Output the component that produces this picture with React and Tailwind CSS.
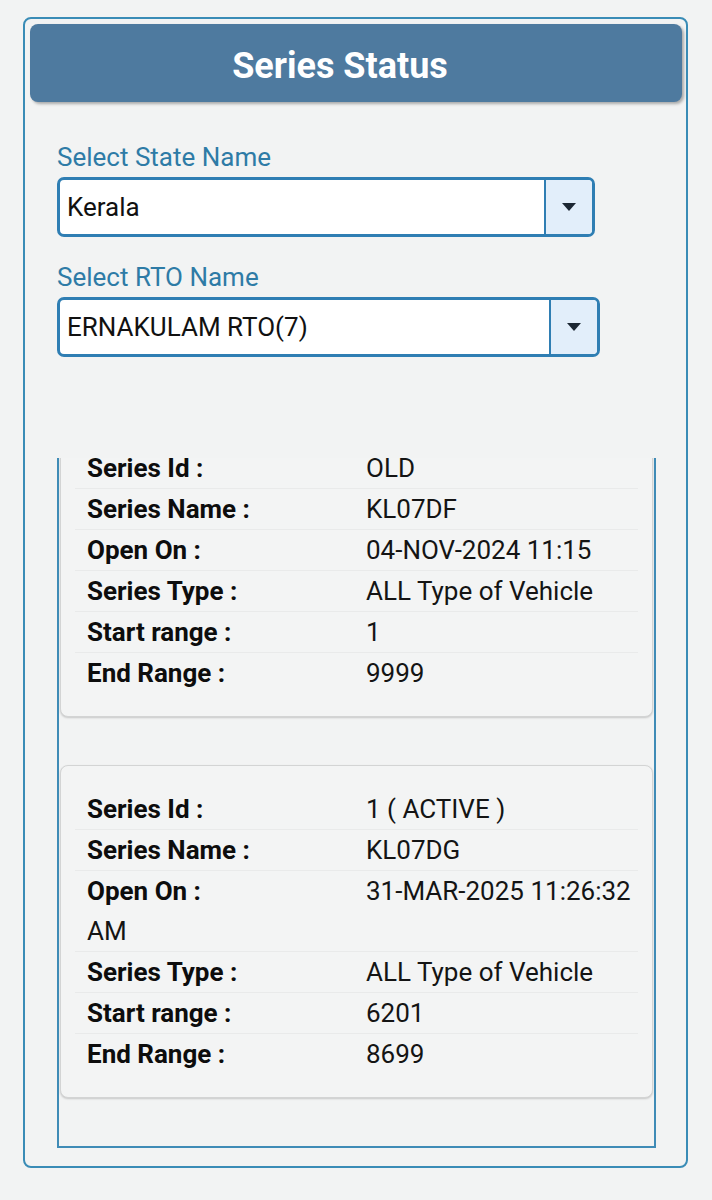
import React from "react";

const card1 = [
  ["Series Id :", "OLD"],
  ["Series Name :", "KL07DF"],
  ["Open On :", "04-NOV-2024 11:15"],
  ["Series Type :", "ALL Type of Vehicle"],
  ["Start range :", "1"],
  ["End Range :", "9999"],
];

const card2 = [
  ["Series Id :", "1 ( ACTIVE )"],
  ["Series Name :", "KL07DG"],
  ["Open On :", "31-MAR-2025 11:26:32 AM"],
  ["Series Type :", "ALL Type of Vehicle"],
  ["Start range :", "6201"],
  ["End Range :", "8699"],
];

function Caret() {
  return (
    <svg width="14" height="8" viewBox="0 0 14 8">
      <path d="M0 0 L14 0 L7 8 Z" fill="#1c2733" />
    </svg>
  );
}

function Select({ value, width }) {
  return (
    <div
      className={`flex h-[60px] items-stretch rounded-[7px] border-[3px] border-[#2f7eb3] bg-white ${width}`}
    >
      <div className="flex flex-1 items-center pl-[7px] text-[26px] text-[#111]">
        {value}
      </div>
      <div className="flex w-[48px] items-center justify-center rounded-r-[4px] border-l-2 border-[#2f7eb3] bg-[#e2eefa]">
        <Caret />
      </div>
    </div>
  );
}

function Card({ rows, className }) {
  return (
    <div
      className={`mx-[1px] rounded-[8px] border border-[#d3d4d4] bg-[#f3f4f4] px-[14px] pt-[23px] pb-[23px] shadow-[0_1px_2px_rgba(0,0,0,0.18)] ${className}`}
    >
      {rows.map(([k, v], i) => (
        <div
          key={i}
          className={`pl-[12px] text-[26px] leading-[40px] text-[#141414] ${
            i < rows.length - 1 ? "border-b border-[#e9eaea]" : ""
          }`}
        >
          <span className="inline-block w-[279px] font-bold text-[#0d0d0d]">{k}</span>
          {v}
        </div>
      ))}
    </div>
  );
}

export default function App() {
  return (
    <div
      className="min-h-screen bg-[#f2f3f3] pt-[17px] pl-[23px] pr-[24px]"
      style={{ fontFamily: "Roboto, 'Noto Sans', sans-serif" }}
    >
      <div className="flex h-[1151px] flex-col rounded-[8px] border-2 border-[#3a8cb6]">
        <div className="mt-[5px] ml-[5px] mr-[4px] flex h-[78px] items-center justify-center rounded-[8px] bg-[#4e7a9f] pt-[6px] pr-[32px] text-[36px] font-bold text-white shadow-[2px_2px_3px_rgba(0,0,0,0.3)]">
          Series Status
        </div>

        <div className="pl-[32px] pt-[40px]">
          <div className="text-[26px] leading-[30px] text-[#2e7ba6]">Select State Name</div>
          <div className="mt-[5px]">
            <Select value="Kerala" width="w-[538px]" />
          </div>
          <div className="mt-[25px] text-[26px] leading-[30px] text-[#2e7ba6]">
            Select RTO Name
          </div>
          <div className="mt-[5px]">
            <Select value="ERNAKULAM RTO(7)" width="w-[543px]" />
          </div>
        </div>

        <div className="mt-[101px] ml-[32px] w-[599px] h-[690px] overflow-hidden border-x-2 border-b-2 border-[#3f8bb6]">
          <Card rows={card1} className="-mt-[34px]" />
          <Card rows={card2} className="mt-[48px]" />
        </div>
      </div>
    </div>
  );
}
